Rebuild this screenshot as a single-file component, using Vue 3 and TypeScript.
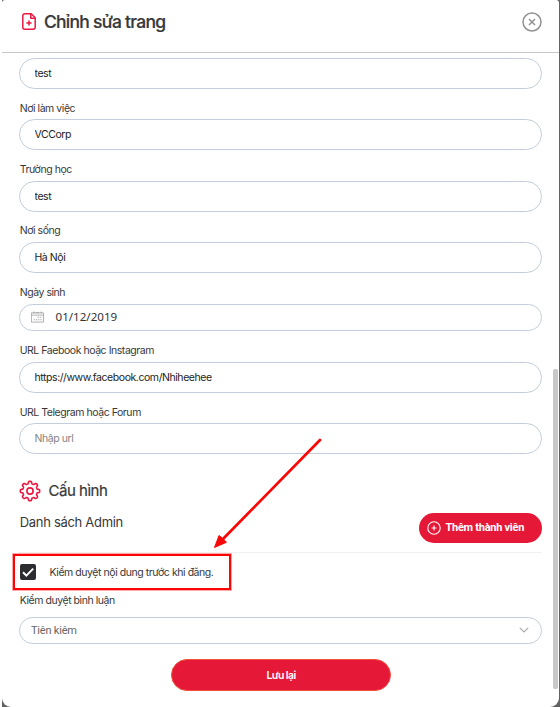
<script setup lang="ts">
import { ref } from 'vue'

interface Field {
  id: string
  label: string
  value: string
  placeholder?: string
}

const current = ref('test')
const fields = ref<Field[]>([
  { id: 'work', label: 'Nơi làm việc', value: 'VCCorp' },
  { id: 'school', label: 'Trường học', value: 'test' },
  { id: 'city', label: 'Nơi sống', value: 'Hà Nội' },
])
const birthday = ref('01/12/2019')
const links = ref<Field[]>([
  { id: 'social', label: 'URL Faebook hoặc Instagram', value: 'https://www.facebook.com/Nhiheehee' },
  { id: 'forum', label: 'URL Telegram hoặc Forum', value: '', placeholder: 'Nhập url' },
])
const moderated = ref(true)

// Outline of the eight-toothed settings wheel, centred on (11, 11).
function gearOutline(): string {
  const points: string[] = []
  for (let i = 0; i < 160; i++) {
    const angle = (i / 160) * Math.PI * 2
    const radius = 8.5 + 1.2 * Math.tanh(2.4 * Math.cos(8 * angle))
    points.push(`${(11 + radius * Math.cos(angle)).toFixed(2)} ${(11 + radius * Math.sin(angle)).toFixed(2)}`)
  }
  return `M${points.join('L')}Z`
}
const gear = gearOutline()
</script>

<template>
  <div class="backdrop">
    <section class="modal">
      <header class="head">
        <svg class="file-icon" viewBox="0 0 14 17" fill="none">
          <path d="M2.8.8h6.4l4 4v9.4a2 2 0 0 1-2 2H2.8a2 2 0 0 1-2-2V2.8a2 2 0 0 1 2-2Z" />
          <path d="M8.8 1v4.2H13M7 7.4v5.2M4.4 10h5.2" />
        </svg>
        <h1>Chỉnh sửa trang</h1>
        <button class="close" type="button" aria-label="Đóng">
          <svg viewBox="0 0 20 20" fill="none">
            <circle cx="10" cy="10" r="9" />
            <path d="m7 7 6 6M13 7l-6 6" />
          </svg>
        </button>
      </header>

      <div class="body">
        <input v-model="current" class="input" type="text" />
        <template v-for="f in fields" :key="f.id">
          <label class="label" :for="f.id">{{ f.label }}</label>
          <input :id="f.id" v-model="f.value" class="input" type="text" />
        </template>

        <span class="label birth">Ngày sinh</span>
        <div class="date">
          <svg viewBox="0 0 14 12" fill="none">
            <path d="M.5 1.5h13v10H.5zM.5 4h13" />
            <path d="M3 0v2.5M11 0v2.5M5 1.5h4" />
            <path class="dots" d="M7 6.2h5M3 9h9" />
          </svg>
          <span>{{ birthday }}</span>
        </div>

        <template v-for="f in links" :key="f.id">
          <label class="label" :class="f.id" :for="f.id">{{ f.label }}</label>
          <input :id="f.id" v-model="f.value" class="input" type="text" :placeholder="f.placeholder" />
        </template>

        <h2 class="section">
          <svg viewBox="0 0 22 22" fill="none">
            <path :d="gear" />
            <circle cx="11" cy="11" r="3.1" />
          </svg>
          <span>Cấu hình</span>
        </h2>

        <div class="admins">
          <h3>Danh sách Admin</h3>
          <button class="add" type="button">
            <svg viewBox="0 0 14 14" fill="none">
              <circle cx="7" cy="7" r="6.2" />
              <path d="M7 4.6v4.8M4.6 7h4.8" />
            </svg>
            <span>Thêm thành viên</span>
          </button>
        </div>

        <div class="highlight">
          <label class="check">
            <input v-model="moderated" type="checkbox" />
            <span class="box">
              <svg v-if="moderated" viewBox="0 0 16 16" fill="none"><path d="m3 8.2 3.4 3.4L13.2 4.6" /></svg>
            </span>
            <span class="check-text">Kiểm duyệt nội dung trước khi đăng.</span>
          </label>
          <svg class="arrow" viewBox="0 0 110 112" fill="none">
            <path class="shaft" d="M106 2 8 102" />
            <path class="tip" d="M.5 109.5 5 97.5l3.6 2.8 3.8 4Z" />
          </svg>
        </div>

        <span class="label comments">Kiểm duyệt bình luận</span>
        <div class="select">
          <span>Tiên kiêm</span>
          <svg viewBox="0 0 10 6" fill="none"><path d="m.8.8 4.2 4.2L9.2.8" /></svg>
        </div>

        <button class="save" type="button">Lưu lại</button>
      </div>

      <div class="scrollbar"></div>
    </section>
  </div>
</template>

<style>
body {
  margin: 0;
  background: #fff;
}
</style>

<style scoped>
.backdrop {
  box-sizing: border-box;
  width: 560px;
  height: 707px;
  padding: 0 1px 0 2px;
  overflow: hidden;
  background: linear-gradient(to right, #fff 2px, #626262 2px);
  font-family: Inter, "Liberation Sans", sans-serif;
  color: #383838;
}
.modal {
  position: relative;
  height: 707px;
  background: #fff;
  border-radius: 3px 3px 9px 9px;
}
.head {
  box-sizing: border-box;
  display: flex;
  align-items: center;
  height: 53px;
  padding: 0 17px 9px 19.5px;
  border-bottom: 1px solid #c8c8c8;
}
.file-icon {
  width: 14px;
  height: 17px;
  margin-right: 8.5px;
  stroke: #ec1740;
  stroke-width: 1.5;
  stroke-linejoin: round;
}
h1 {
  flex: 1;
  margin: 0;
  font-size: 17.5px;
  font-weight: 500;
  letter-spacing: -0.75px;
  line-height: 24px;
  -webkit-text-stroke: 0.2px;
}
.close {
  width: 20px;
  height: 20px;
  padding: 0;
  border: 0;
  background: none;
}
.close svg {
  display: block;
  stroke: #929292;
  stroke-width: 1.5;
}
.body {
  display: flex;
  flex-direction: column;
  padding: 5px 17px 0;
}
.input,
.date,
.select {
  box-sizing: border-box;
  width: 523px;
  border: 1px solid #c3cddb;
  border-radius: 16px;
  background: #fff;
}
.input {
  height: 31px;
  padding: 0 14.5px;
  outline: 0;
  font: 10.5px Inter, "Liberation Sans", sans-serif;
  letter-spacing: -0.43px;
  color: #222;
}
.input::placeholder {
  color: #858585;
  opacity: 1;
}
.label {
  box-sizing: border-box;
  height: 30.4px;
  padding: 11.7px 0 0 0.7px;
  font-size: 10.5px;
  line-height: 16px;
  letter-spacing: -0.45px;
}
.label.birth {
  height: 30.8px;
}
.label.social {
  height: 31px;
}
.date {
  display: flex;
  align-items: center;
  gap: 11.5px;
  height: 27px;
  padding: 0 0 1px 11px;
  font: 11.6px "Noto Sans", sans-serif;
  color: #333;
}
.date svg {
  width: 13px;
  height: 12px;
  stroke: #999;
  stroke-width: 0.8;
}
.date .dots {
  stroke-width: 1.2;
  stroke-dasharray: 1.2 1.2;
}
.section {
  display: flex;
  align-items: center;
  gap: 7.5px;
  height: 22px;
  margin: 25.6px 0 0;
  font-size: 15px;
  font-weight: 400;
  line-height: 20px;
  letter-spacing: -0.48px;
  -webkit-text-stroke: 0.2px;
}
.section span {
  padding-top: 1px;
}
.section svg {
  width: 22px;
  height: 22px;
  stroke: #ec1740;
  stroke-width: 1.6;
  stroke-linejoin: round;
}
.admins {
  box-sizing: border-box;
  display: flex;
  align-items: flex-start;
  justify-content: space-between;
  width: 523px;
  height: 40px;
  margin-top: 11px;
  border-bottom: 1px solid #f0f0f0;
}
h3 {
  margin: -0.4px 0 0 0.7px;
  font-size: 13px;
  font-weight: 400;
  line-height: 18px;
  letter-spacing: -0.3px;
}
.add {
  display: flex;
  align-items: center;
  gap: 5px;
  width: 123.5px;
  height: 30px;
  margin: 0;
  padding: 0 0 0 8px;
  border: 0;
  border-radius: 15px;
  background: #e51937;
  color: #fff;
  font: bold 11px Roboto, "Liberation Sans", sans-serif;
  letter-spacing: -0.27px;
  white-space: nowrap;
}
.add svg {
  width: 14px;
  height: 14px;
  stroke: #fff;
  stroke-width: 1.1;
}
.highlight {
  position: relative;
  box-sizing: border-box;
  width: 218px;
  height: 36px;
  margin: 1px 0 0 -6px;
  border: 2px solid #fb0606;
  outline: 0.5px solid rgba(251, 6, 6, 0.35);
}
.check {
  display: flex;
  align-items: center;
  gap: 13.5px;
  height: 32px;
  padding-left: 5px;
  font-size: 10.5px;
  letter-spacing: -0.44px;
  white-space: nowrap;
}
.check input {
  position: absolute;
  opacity: 0;
}
.box {
  width: 16px;
  height: 16px;
  border-radius: 2px;
  background: #2d2d31;
}
.box svg {
  display: block;
  stroke: #fff;
  stroke-width: 2;
}
.check-text {
  padding-top: 1px;
}
.arrow {
  position: absolute;
  left: 199px;
  top: -118px;
  width: 110px;
  height: 112px;
}
.shaft {
  stroke: #fb0606;
  stroke-width: 2.7;
  stroke-linecap: round;
}
.tip {
  fill: #fb0606;
  stroke: #fb0606;
}
.label.comments {
  height: 27px;
  padding-top: 2.7px;
}
.select {
  display: flex;
  align-items: center;
  justify-content: space-between;
  height: 27px;
  padding: 1px 12px 0 11px;
  font: 11px Roboto, "Liberation Sans", sans-serif;
  letter-spacing: -0.2px;
  color: #666;
}
.select svg {
  width: 10px;
  height: 6px;
  margin-bottom: 1px;
  stroke: #aaa;
  stroke-width: 1.2;
}
.save {
  width: 220px;
  height: 32px;
  margin: 15px 0 0 152px;
  padding: 1px 0 0;
  border: 1px solid #f0503c;
  border-radius: 16px;
  background: #e51937;
  color: #fff;
  font: 600 10.5px Inter, "Liberation Sans", sans-serif;
  letter-spacing: -0.6px;
}
.scrollbar {
  position: absolute;
  top: 369px;
  right: 1px;
  width: 5px;
  height: 320px;
  border-radius: 2px;
  background: #c8c8c8;
}
</style>
